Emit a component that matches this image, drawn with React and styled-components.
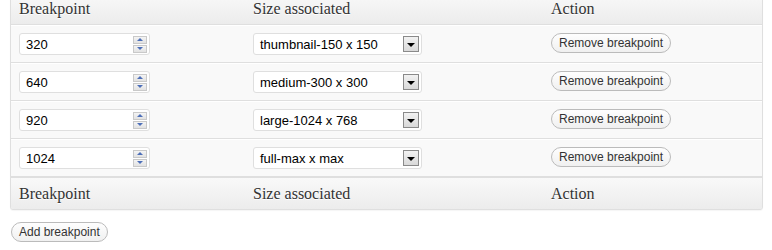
import React from 'react';
import styled, { createGlobalStyle } from 'styled-components';

const GlobalStyle = createGlobalStyle`
    html, body {
        margin: 0;
        padding: 0;
        background: #fff;
    }
    body {
        font-family: "Liberation Sans", Arial, sans-serif;
        font-size: 13px;
        color: #333;
    }
`

const Page = styled.div`
    padding: 0 11px 0 10px;
    margin-top: -8px;
`

const Table = styled.div`
    width: 751px;
    border: 1px solid #dfdfdf;
    border-radius: 3px;
    background: #f9f9f9;
    box-shadow: 0 1px 1px rgba(0, 0, 0, 0.04);
    overflow: hidden;
`

const HeadRow = styled.div`
    display: grid;
    grid-template-columns: 234px 298px 1fr;
    height: ${props => props.$foot ? 31 : 31}px;
    align-items: center;
    background: linear-gradient(to bottom, #f9f9f9, #ececec);
    border-top: ${props => props.$foot ? '1px solid #dfdfdf' : 'none'};
    border-bottom: ${props => props.$foot ? 'none' : '1px solid #dfdfdf'};
    font-family: "Liberation Serif", Georgia, serif;
    font-size: 16px;
    color: #333;
    span {
        padding-left: 8px;
        text-shadow: 0 1px 0 #fff;
    }
`

const Row = styled.div`
    display: grid;
    grid-template-columns: 234px 298px 1fr;
    height: 36px;
    align-items: center;
    border-top: 1px solid #fff;
    border-bottom: 1px solid #dfdfdf;
`

const Cell = styled.div`
    padding-left: 8px;
    display: flex;
    align-items: center;
`

const NumberBox = styled.div`
    width: 131px;
    height: 22px;
    box-sizing: border-box;
    border: 1px solid #dfdfdf;
    border-radius: 3px;
    background: #fff;
    display: flex;
    align-items: center;
    justify-content: space-between;
    padding: 0 2px 0 6px;
    font-size: 13px;
    color: #000;
`

const Spinner = styled.div`
    display: flex;
    flex-direction: column;
    gap: 1px;
`

const SpinButton = styled.div`
    width: 14px;
    height: 8px;
    box-sizing: border-box;
    border: 1px solid #c9c9c9;
    background: linear-gradient(to bottom, #f4f4f4, #e2e2e2);
    display: flex;
    align-items: center;
    justify-content: center;
    &::after {
        content: '';
        border-left: 3px solid transparent;
        border-right: 3px solid transparent;
        ${props => props.$down
            ? 'border-top: 3px solid #4d6fb8;'
            : 'border-bottom: 3px solid #4d6fb8;'}
    }
`

const SelectBox = styled.div`
    width: 169px;
    height: 22px;
    box-sizing: border-box;
    border: 1px solid #dfdfdf;
    border-radius: 3px;
    background: #fff;
    display: flex;
    align-items: center;
    justify-content: space-between;
    padding: 0 2px 0 6px;
    font-size: 13px;
    color: #000;
`

const SelectArrow = styled.div`
    width: 16px;
    height: 16px;
    box-sizing: border-box;
    border: 1px solid #8a8a8a;
    background: linear-gradient(to bottom, #f2f2f2, #d9d9d9);
    display: flex;
    align-items: center;
    justify-content: center;
    &::after {
        content: '';
        margin-top: 1px;
        border-left: 4px solid transparent;
        border-right: 4px solid transparent;
        border-top: 4px solid #000;
    }
`

const PillButton = styled.button`
    height: 20px;
    box-sizing: border-box;
    padding: 0 7px;
    border: 1px solid #bbb;
    border-radius: 11px;
    background: linear-gradient(to bottom, #fefefe, #f0f0f0);
    font-family: "Liberation Sans", Arial, sans-serif;
    font-size: 12px;
    line-height: 18px;
    color: #333;
    cursor: pointer;
    margin-top: -2px;
`

const Footer = styled.div`
    padding: 14px 0 0 1px;
`

const HEAD = ['Breakpoint', 'Size associated', 'Action']

const ROWS = [
    { width: '320', size: 'thumbnail-150 x 150' },
    { width: '640', size: 'medium-300 x 300' },
    { width: '920', size: 'large-1024 x 768' },
    { width: '1024', size: 'full-max x max' },
]

const App = () => {
    return (<>
        <GlobalStyle />
        <Page>
            <Table>
                <HeadRow>
                    {HEAD.map(h => <span key={h}>{h}</span>)}
                </HeadRow>
                {ROWS.map(row =>
                    <Row key={row.width}>
                        <Cell>
                            <NumberBox>
                                {row.width}
                                <Spinner>
                                    <SpinButton />
                                    <SpinButton $down />
                                </Spinner>
                            </NumberBox>
                        </Cell>
                        <Cell>
                            <SelectBox>
                                {row.size}
                                <SelectArrow />
                            </SelectBox>
                        </Cell>
                        <Cell>
                            <PillButton>Remove breakpoint</PillButton>
                        </Cell>
                    </Row>)}
                <HeadRow $foot>
                    {HEAD.map(h => <span key={h}>{h}</span>)}
                </HeadRow>
            </Table>
            <Footer>
                <PillButton>Add breakpoint</PillButton>
            </Footer>
        </Page>
    </>);
}

export default App;
